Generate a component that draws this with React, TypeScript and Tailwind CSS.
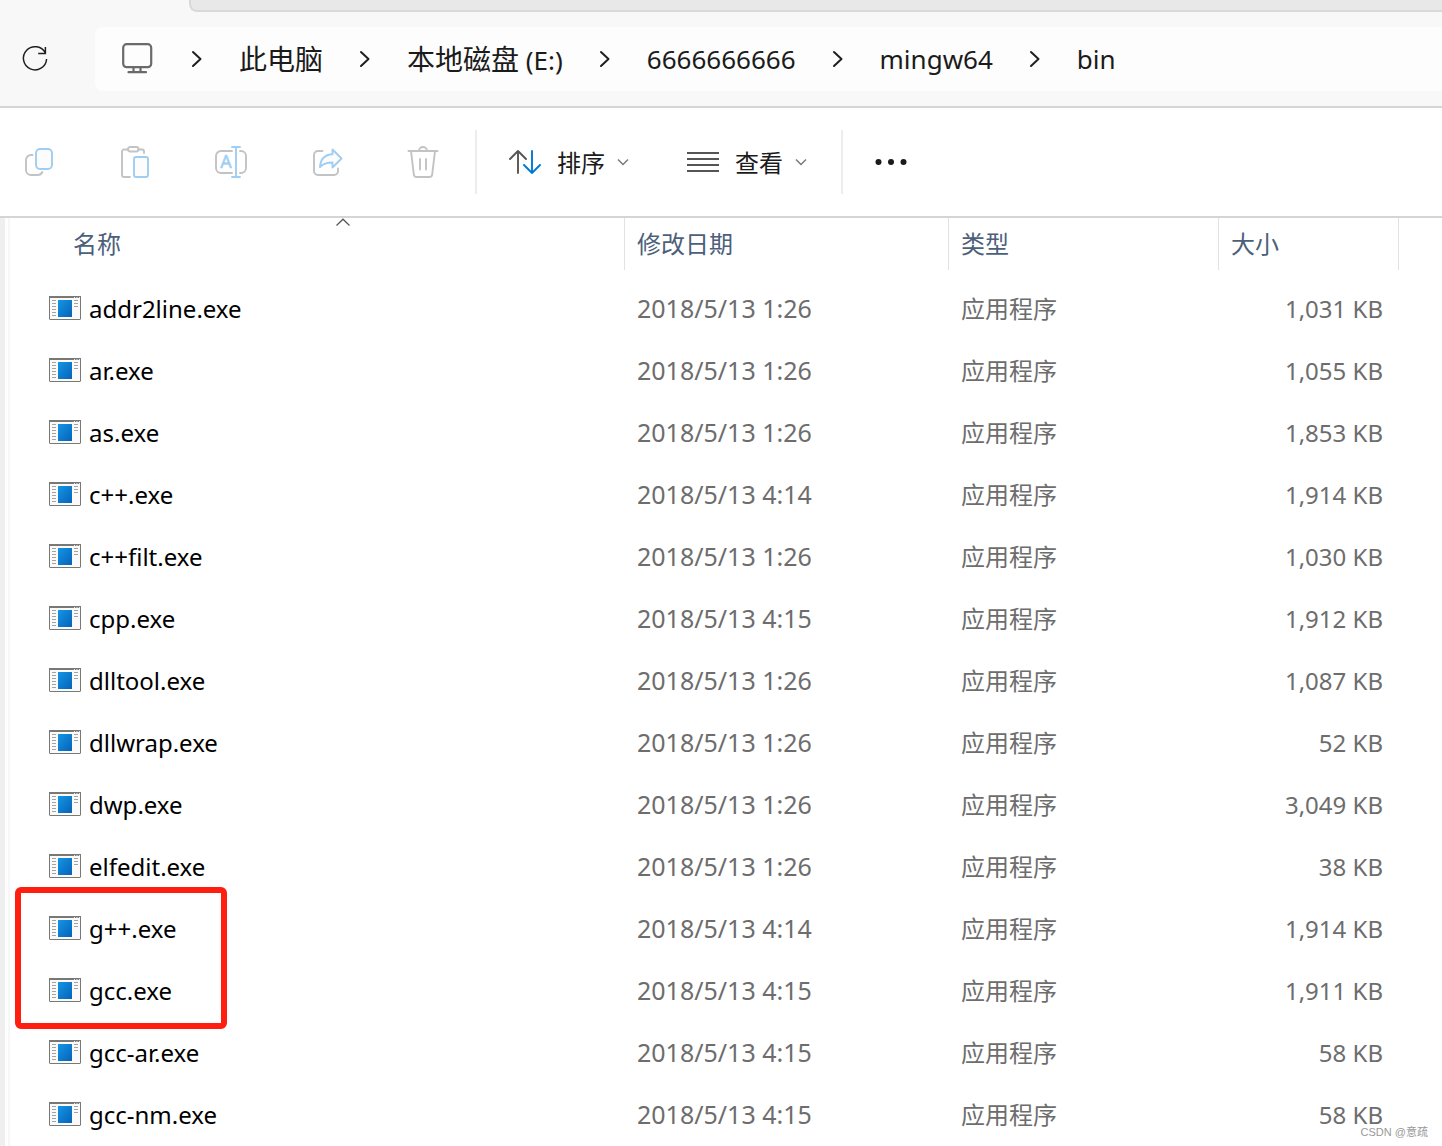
import React, { Fragment } from "react";

type FileEntry = { name: string; modified: string; size: string; marked?: boolean };

const files: FileEntry[] = [
  { name: "addr2line.exe", modified: "2018/5/13 1:26", size: "1,031 KB" },
  { name: "ar.exe", modified: "2018/5/13 1:26", size: "1,055 KB" },
  { name: "as.exe", modified: "2018/5/13 1:26", size: "1,853 KB" },
  { name: "c++.exe", modified: "2018/5/13 4:14", size: "1,914 KB" },
  { name: "c++filt.exe", modified: "2018/5/13 1:26", size: "1,030 KB" },
  { name: "cpp.exe", modified: "2018/5/13 4:15", size: "1,912 KB" },
  { name: "dlltool.exe", modified: "2018/5/13 1:26", size: "1,087 KB" },
  { name: "dllwrap.exe", modified: "2018/5/13 1:26", size: "52 KB" },
  { name: "dwp.exe", modified: "2018/5/13 1:26", size: "3,049 KB" },
  { name: "elfedit.exe", modified: "2018/5/13 1:26", size: "38 KB" },
  { name: "g++.exe", modified: "2018/5/13 4:14", size: "1,914 KB", marked: true },
  { name: "gcc.exe", modified: "2018/5/13 4:15", size: "1,911 KB" },
  { name: "gcc-ar.exe", modified: "2018/5/13 4:15", size: "58 KB" },
  { name: "gcc-nm.exe", modified: "2018/5/13 4:15", size: "58 KB" },
];

const GREY = "#c3c3c3";
const BLUE = "#9fcef2";

function Icon({ children }: { children: React.ReactNode }) {
  return (
    <svg
      className="size-8"
      viewBox="0 0 32 32"
      fill="none"
      strokeWidth="1.9"
      strokeLinecap="round"
      strokeLinejoin="round"
      aria-hidden="true"
    >
      {children}
    </svg>
  );
}

const CopyIcon = () => (
  <Icon>
    <path d="M9.5 9H8a5 5 0 0 0-5 5v10a5 5 0 0 0 5 5h6.500a5.500 5.500 0 0 0 5-3" stroke={GREY} />
    <rect x="13" y="3" width="16" height="20" rx="4" stroke={BLUE} fill="#fcfcfc" />
  </Icon>
);

const PasteIcon = () => (
  <Icon>
    <path d="M8.500 3.500H5a2 2 0 0 0-2 2V29a2 2 0 0 0 2 2h6M19.500 3.500H23a2 2 0 0 1 2 2V7" stroke={GREY} />
    <rect x="9" y="1" width="10.500" height="4.500" rx="2.200" stroke={GREY} />
    <rect x="15" y="11" width="14" height="20" rx="2" stroke={BLUE} fill="#fcfcfc" />
  </Icon>
);

const RenameIcon = () => (
  <Icon>
    <path d="M17 5H6a5 5 0 0 0-5 5v12a5 5 0 0 0 5 5h11M25 5h1a5 5 0 0 1 5 5v12a5 5 0 0 1-5 5h-1" stroke={GREY} />
    <path d="M17 1h8M17 31h8M21 1v30" stroke={BLUE} />
    <text x="11" y="21.500" textAnchor="middle" fontFamily="Noto Sans" fontSize="18" fill={BLUE} stroke={BLUE} strokeWidth="0.5">
      A
    </text>
  </Icon>
);

const ShareIcon = () => (
  <Icon>
    <path d="M11.500 5H7a4 4 0 0 0-4 4v16a4 4 0 0 0 4 4h16a4 4 0 0 0 4-4v-2.500" stroke={GREY} />
    <path d="M21.500 3.500 30.500 12.500l-9 9v-5c-5.500 0-9 1-12.500 4.500C9.500 13 14 8.500 21.500 8.200z" stroke={BLUE} fill="#fcfcfc" />
  </Icon>
);

const TrashIcon = () => (
  <Icon>
    <path d="M1.500 5h29M12 5a4 4 0 0 1 8 0M4 5l2.800 23.300A3 3 0 0 0 9.800 31h12.400a3 3 0 0 0 3-2.700L28 5M13 13v10.500M19 13v10.500" stroke={GREY} />
  </Icon>
);

const SortIcon = () => (
  <svg className="h-8 w-8" viewBox="0 0 32 32" fill="none" strokeWidth="1.900" strokeLinecap="round" strokeLinejoin="round" aria-hidden="true">
    <path d="M9 27V5M1 13l8-8 8 8" stroke="#555555" />
    <path d="M23 5v22M15 19l8 8 8-8" stroke="#0078d4" />
  </svg>
);

const ViewIcon = () => (
  <svg className="h-8 w-8" viewBox="0 0 32 32" stroke="#555555" strokeWidth="2" aria-hidden="true">
    <path d="M0 7h32M0 13h32M0 19h32M0 25h32" />
  </svg>
);

const DownIcon = () => (
  <svg className="h-3 w-3" viewBox="0 0 12 12" fill="none" stroke="#777777" strokeWidth="1.400" aria-hidden="true">
    <path d="m1 3.500 5 5 5-5" />
  </svg>
);

const CrumbChevron = () => (
  <svg className="h-5 w-3 shrink-0" viewBox="0 0 12 20" fill="none" stroke="#1f1f1f" strokeWidth="2" strokeLinecap="round" strokeLinejoin="round" aria-hidden="true">
    <path d="m2 3 7.500 7L2 17" />
  </svg>
);

const ExeIcon = () => (
  <svg className="mb-0.5 h-6 w-8 shrink-0" viewBox="0 0 32 24" aria-hidden="true">
    <defs>
      <linearGradient id="exeBlue" x1="0" y1="0" x2="1" y2="1">
        <stop offset="0" stopColor="#1595e5" />
        <stop offset="1" stopColor="#0563b8" />
      </linearGradient>
    </defs>
    <rect x="0.500" y="0.500" width="31" height="23" rx="0.500" fill="#fafafa" stroke="#7a7875" />
    <path d="M0 1h32" stroke="#7a7875" strokeWidth="2" />
    <path d="M25 1.500h1M27.500 1.500h1M30 1.500h1" stroke="#e8e8e8" />
    <path d="M3 4.500h4M3 7.500h4M3 10.500h4M3 13.500h4M3 16.500h4M3 19.500h4M25 4.500h4M25 7.500h4M25 10.500h4" stroke="#a3a3a3" />
    <rect x="9" y="4" width="14" height="17" fill="url(#exeBlue)" />
  </svg>
);

const crumbs = [
  { id: "pc", label: <span className="text-[28px]">此电脑</span> },
  {
    id: "disk",
    label: (
      <>
        <span className="text-[28px]">本地磁盘</span> (E:)
      </>
    ),
  },
  { id: "dir", label: "6666666666" },
  { id: "mingw", label: "mingw64" },
  { id: "bin", label: "bin" },
];

const actions = [
  { label: "复制", icon: <CopyIcon /> },
  { label: "粘贴", icon: <PasteIcon /> },
  { label: "重命名", icon: <RenameIcon /> },
  { label: "共享", icon: <ShareIcon /> },
  { label: "删除", icon: <TrashIcon /> },
];

const headCell = "h-[52px] border-r border-[#e2e2e2] pl-3 text-left text-2xl font-normal";

export default function App() {
  return (
    <div className="relative min-h-screen overflow-hidden bg-white font-['Noto_Sans','Noto_Sans_CJK_SC',sans-serif] text-black">
      <header className="border-b-2 border-[#d5d5d5] bg-[#f8f8f8]">
        <div className="ml-[189px] h-3 rounded-bl-lg border-b-2 border-l-2 border-[#d9d9d9] bg-[#e8e8e8]" />
        <div className="flex pt-[15px] pb-[15px]">
          <div className="flex w-[95px] shrink-0 items-center pl-[21px]">
            <button type="button" aria-label="刷新">
              <svg className="size-7" viewBox="0 0 28 28" fill="none" stroke="#1f1f1f" strokeWidth="1.500" aria-hidden="true">
                <path d="M24.500 8.300A11.600 11.600 0 1 0 25.600 14M24.400 2v6.600h-7.200" />
              </svg>
            </button>
          </div>
          <nav aria-label="路径" className="flex h-16 flex-1 items-center gap-9 rounded-l-lg bg-[#fdfdfd] pl-[26px] text-[26px] whitespace-nowrap text-[#1b1b1b]">
            <button type="button" aria-label="此电脑" className="mr-0.5">
              <svg className="size-8" viewBox="0 0 32 32" fill="none" stroke="#6a6a6a" strokeWidth="2.200" strokeLinecap="round" aria-hidden="true">
                <rect x="2.200" y="1.200" width="28" height="23" rx="3.500" />
                <path d="M12.500 25v4M19.500 25v4M7.500 29.200h17.500" />
              </svg>
            </button>
            {crumbs.map((c) => (
              <Fragment key={c.id}>
                <CrumbChevron />
                <a href="#" className="leading-10">{c.label}</a>
              </Fragment>
            ))}
          </nav>
        </div>
      </header>

      <div role="toolbar" aria-label="命令" className="flex h-[110px] items-center border-b-2 border-[#d5d5d5] pl-[23px] text-2xl text-[#1b1b1b]">
        <div className="flex gap-16">
          {actions.map((a) => (
            <button key={a.label} type="button" aria-label={a.label}>
              {a.icon}
            </button>
          ))}
        </div>
        <div className="ml-9 h-16 w-0.5 bg-[#ededed]" />
        <button type="button" className="ml-8 flex items-center">
          <SortIcon />
          <span className="mr-3 ml-4 pt-0.5">排序</span>
          <DownIcon />
        </button>
        <button type="button" className="ml-[58px] flex items-center">
          <ViewIcon />
          <span className="mr-3 ml-4 pt-0.5">查看</span>
          <DownIcon />
        </button>
        <div className="ml-[34px] h-16 w-0.5 bg-[#ededed]" />
        <button type="button" aria-label="更多" className="ml-8">
          <svg className="size-8" viewBox="0 0 32 32" fill="#1b1b1b" aria-hidden="true">
            <circle cx="3.500" cy="16" r="3" />
            <circle cx="16" cy="16" r="3" />
            <circle cx="28.500" cy="16" r="3" />
          </svg>
        </button>
      </div>

      <main className="flex">
        <div className="w-[5px] shrink-0 bg-[#efefef]" />
        <div className="ml-[3px] w-0.5 shrink-0 bg-[#f7f7f7]" />
        <table className="w-full table-fixed border-separate border-spacing-0">
          <colgroup>
            <col />
            <col className="w-[324px]" />
            <col className="w-[270px]" />
            <col className="w-[180px]" />
            <col className="w-[43px]" />
          </colgroup>
          <thead className="text-[#4c607a]">
            <tr>
              <th scope="col" aria-sort="ascending" className="relative h-[52px] border-r border-[#e2e2e2] pl-[63px] text-left text-2xl font-normal">
                名称
                <svg className="absolute top-0 left-[325px] h-2 w-4" viewBox="0 0 16 8" fill="none" stroke="#555555" strokeWidth="1.200" aria-hidden="true">
                  <path d="m1.500 7.500 6.500-6.300 6.500 6.300" />
                </svg>
              </th>
              <th scope="col" className={headCell}>修改日期</th>
              <th scope="col" className={headCell}>类型</th>
              <th scope="col" className={headCell}>大小</th>
              <td />
            </tr>
            <tr aria-hidden="true">
              <td className="h-2" colSpan={5} />
            </tr>
          </thead>
          <tbody className="text-2xl text-[#6d6d6d]">
            {files.map((f) => (
              <tr key={f.name}>
                <td className="relative h-[62px] pl-[39px]">
                  <div className="flex items-center gap-2 text-black">
                    <ExeIcon />
                    <span>{f.name}</span>
                  </div>
                  {f.marked && (
                    <div className="pointer-events-none absolute top-[-11px] left-[5px] h-[142px] w-[212px] rounded-md border-6 border-[#ff1f10]" />
                  )}
                </td>
                <td className="pl-3 text-[25px]">{f.modified}</td>
                <td className="pl-3">应用程序</td>
                <td className="pr-4 text-right">{f.size}</td>
                <td />
              </tr>
            ))}
          </tbody>
        </table>
      </main>
      <div className="absolute right-[14px] bottom-1 font-['Liberation_Sans','Noto_Sans_CJK_SC',sans-serif] text-[11px] leading-5 text-[#999999]">CSDN @意疏</div>
    </div>
  );
}
